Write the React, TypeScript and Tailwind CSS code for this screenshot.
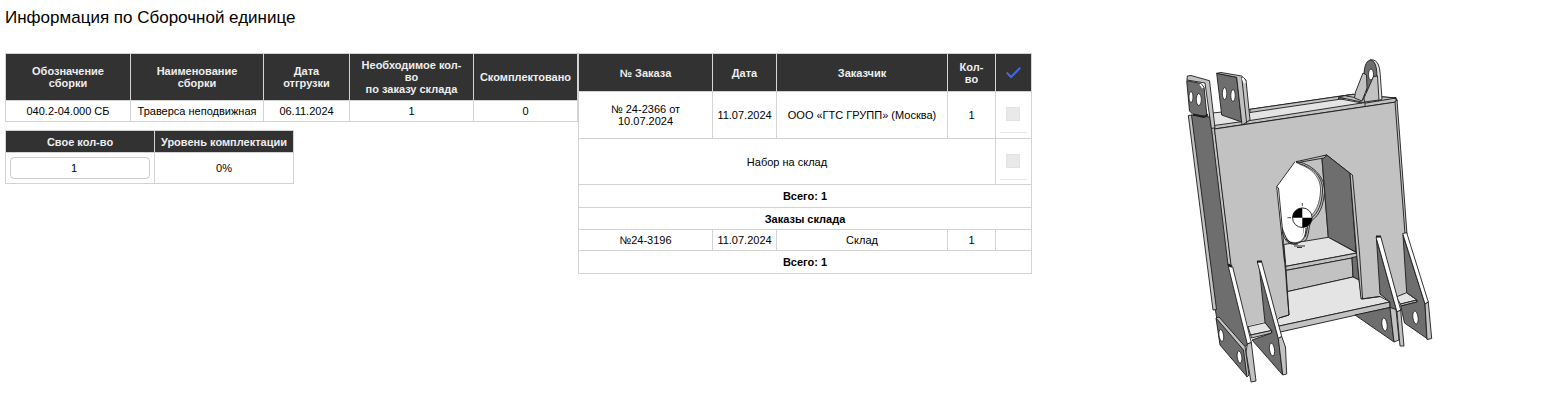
import React from "react";

const HEAD = "border border-[#d3d3d3] bg-[#323232] px-1 text-[#eeeeee] font-bold";
const CELL = "border border-[#d3d3d3] px-1";
const TABLE = "table-fixed border-collapse text-center text-[11px] leading-[12px]";

function PickBox({ label }: { label: string }) {
  return (
    <label className="flex h-9 items-center justify-center border-b border-[#e6e6e6] pr-px pb-px">
      <input
        type="checkbox"
        disabled
        aria-label={label}
        className="block size-3.5 appearance-none border border-[#e2e2e2] bg-[#e9e9e9]"
      />
    </label>
  );
}

function AssemblyTable() {
  return (
    <table className={TABLE + " w-[573px]"}>
      <colgroup>
        <col className="w-[125px]" />
        <col className="w-[133px]" />
        <col className="w-[86px]" />
        <col className="w-[124px]" />
        <col className="w-[104px]" />
      </colgroup>
      <thead>
        <tr className="h-[47px]">
          <th className={HEAD}>Обозначение<br />сборки</th>
          <th className={HEAD}>Наименование<br />сборки</th>
          <th className={HEAD}>Дата<br />отгрузки</th>
          <th className={HEAD}>Необходимое кол-<br />во<br />по заказу склада</th>
          <th className={HEAD}>Скомплектовано</th>
        </tr>
      </thead>
      <tbody>
        <tr className="h-[21px]">
          <td className={CELL}>040.2-04.000 СБ</td>
          <td className={CELL + " whitespace-nowrap"}>Траверса неподвижная</td>
          <td className={CELL}>06.11.2024</td>
          <td className={CELL}>1</td>
          <td className={CELL}>0</td>
        </tr>
      </tbody>
    </table>
  );
}

function QuantityTable() {
  return (
    <table className={TABLE + " mt-2 w-[289px]"}>
      <colgroup>
        <col className="w-[149px]" />
        <col className="w-[139px]" />
      </colgroup>
      <thead>
        <tr className="h-[22px]">
          <th className={HEAD}>Свое кол-во</th>
          <th className={HEAD + " whitespace-nowrap"}>Уровень комплектации</th>
        </tr>
      </thead>
      <tbody>
        <tr className="h-[31px]">
          <td className={CELL}>
            <input
              type="text"
              inputMode="numeric"
              defaultValue="1"
              aria-label="Свое кол-во"
              className="block h-[22px] w-full rounded border border-[#cccccc] bg-white pr-3 text-center text-[11px]"
            />
          </td>
          <td className={CELL}>0%</td>
        </tr>
      </tbody>
    </table>
  );
}

function OrdersTable() {
  return (
    <table className={TABLE + " w-[454px] shrink-0"}>
      <colgroup>
        <col className="w-[134px]" />
        <col className="w-[64px]" />
        <col className="w-[171px]" />
        <col className="w-[48px]" />
        <col className="w-[36px]" />
      </colgroup>
      <thead>
        <tr className="h-[38px]">
          <th className={HEAD}>№ Заказа</th>
          <th className={HEAD}>Дата</th>
          <th className={HEAD}>Заказчик</th>
          <th className={HEAD}>Кол-<br />во</th>
          <th className={HEAD}>
            <svg viewBox="0 0 15 12" className="mx-auto h-3 w-[15px]" fill="none" stroke="#4169e1" strokeWidth="2" aria-hidden="true">
              <path d="M.7 5.5 5 10 14.2 .8" />
            </svg>
          </th>
        </tr>
      </thead>
      <tbody>
        <tr className="h-[47px]">
          <td className={CELL}>№ 24-2366 от<br />10.07.2024</td>
          <td className={CELL}>11.07.2024</td>
          <td className={CELL + " whitespace-nowrap"}>ООО «ГТС ГРУПП» (Москва)</td>
          <td className={CELL}>1</td>
          <td className={CELL}><PickBox label="№ 24-2366" /></td>
        </tr>
        <tr className="h-[46px]">
          <td className={CELL} colSpan={4}>Набор на склад</td>
          <td className={CELL}><PickBox label="Набор на склад" /></td>
        </tr>
        <tr className="h-[23px]">
          <td className={CELL + " font-bold"} colSpan={5}>Всего: 1</td>
        </tr>
        <tr className="h-[22px]">
          <td className={CELL + " font-bold"} colSpan={5}>Заказы склада</td>
        </tr>
        <tr className="h-[21px]">
          <td className={CELL}>№24-3196</td>
          <td className={CELL}>11.07.2024</td>
          <td className={CELL}>Склад</td>
          <td className={CELL}>1</td>
          <td className={CELL} />
        </tr>
        <tr className="h-[23px]">
          <td className={CELL + " font-bold"} colSpan={5}>Всего: 1</td>
        </tr>
      </tbody>
    </table>
  );
}

const DARK = "#6e6e6e";
const MID = "#c2c2c2";
const PALE = "#e4e4e4";

function TraverseDrawing() {
  return (
    <svg
      viewBox="1180 53 260 335"
      className="h-[335px] w-[260px]"
      stroke="#1c1c1c"
      strokeWidth=".9"
      strokeLinejoin="round"
      fill="none"
      role="img"
      aria-label="Траверса неподвижная"
    >
      {/* top deck */}
      <path fill={PALE} d="M1212 113 1250 109.3 1353 94.3 1396 98 1396 102 1214 129Z" />
      <path fill={MID} d="M1250 109.3 1353 94.3 1355 97 1250 112.5Z" />
      <path fill={MID} d="M1214 125.5 1250 120.5 1365 102.5 1396 97.5V102L1214 129Z" />
      <path fill={MID} d="M1338 97 1353 94.3 1396 98 1366 103Z" />
      <path d="M1338 98.5 1362 103M1346 96 1370 100M1365 103V106" />

      {/* left column side */}
      <path fill={DARK} d="M1191 115 1210 117 1231 266 1248 344 1245 346.5 1216.7 318 1212 290Z" />
      <path fill={MID} d="M1188.3 115.5 1191.5 115 1216.5 309.5 1213 310Z" />
      <path fill={MID} d="M1209.3 110 1214.5 128.5 1231.5 266 1228 265Z" />

      {/* front plate with the opening */}
      <path
        fill={MID}
        fillRule="evenodd"
        stroke="none"
        d="M1214.5 129 1396 102 1406 234 1409 296 1361.7 299 1289 315 1263 322 1248 326 1231 265ZM1276.7 186.7 1295 161.7 1326.7 155 1350 173.3 1358 253 1361.7 299 1289 315 1285 260Z"
      />
      <path d="M1214.5 129 1396 102 1406 234M1396 102 1397.5 100 1394 97.5M1214.5 129 1231 265" />
      <path fill={MID} d="M1395 102 1397 100 1407 234 1405 234Z" />

      {/* inside of the opening */}
      <path fill={MID} stroke="none" d="M1295 161.7 1326.7 155 1329 240 1285 246 1283 228Z" />
      <path fill="#fff" stroke="none" d="M1276.7 186.7 1295 161.7C1315 166 1321 178 1320.5 191C1320 203 1317 211 1310 218C1304 223 1307 230 1303.5 237C1300 242 1296 243 1290 241C1287 239 1286 232 1282 228Z" />
      <path d="M1297 161.5C1315 165 1326 180 1324.5 192C1323.5 206 1319 215 1313.5 219C1308 223 1310 231 1306.5 239C1302 246 1291 245 1286 239" />
      <path d="M1296 162.5C1316 168 1323 179 1322.5 191C1322 204 1318 213 1311.5 218C1307 222 1308 230 1305 237" />
      <path strokeWidth=".7" d="M1299 164C1316 170 1321 181 1320.5 191C1320 203 1316 212 1309 218M1303.5 227C1304 237 1298 241 1291 241" />
      <path fill={DARK} d="M1321.7 156.5 1326.7 155 1350 173.3 1356 252 1328.3 237.3Z" />
      <path fill={MID} d="M1321.7 156.5 1324 156 1330.5 238.5 1328.3 237.3Z" stroke="none" />
      <path fill={DARK} d="M1322 157 1326.7 155 1350 173.3 1356 252 1328.3 237.3Z" />
      <path fill={MID} d="M1296 161.7 1326.7 155 1324 158 1298 162.5Z" />
      <path fill={PALE} d="M1283.5 244.5 1306 241 1328.3 237.3 1357 253 1285 266.5Z" />
      <path fill="#fff" stroke="none" d="M1284 231C1287 240 1291 243 1297 242Q1303 240 1303.5 228L1300 224Z" />
      <path d="M1282 228C1286 238 1287 243 1296 243.5C1303 243 1306 236 1306 228" />
      <path d="M1282.5 232C1284 241 1290 246 1298 244M1294 246H1305M1297 247.5H1302" />
      <path fill={MID} d="M1285 266.5 1357 253 1358 257 1285.5 270.5Z" />
      <path fill={MID} d="M1285.5 270.5 1352 258 1353 277 1287 291.7Z" />
      <path fill={DARK} d="M1352 257.5 1357 256.5 1359 280 1353 277Z" />

      {/* bottom deck */}
      <path fill={PALE} d="M1287 291.7 1353 277 1359 280 1361.7 299 1380 296.5 1390 302 1270 328 1279 318 1289 315Z" />
      <path fill={MID} d="M1270 328 1390 302V307.5L1278 332.5Z" />
      <path fill={MID} d="M1350 173.3 1352.5 175 1359.5 253 1362.5 298 1361 299 1356.5 253Z" />
      <path d="M1276.7 186.7 1278.5 188 1285.5 262 1289 315 1279 318" />
      <path d="M1276.7 186.7 1295 161.7M1276.7 186.7 1284.5 262M1361.7 299 1380 296.5" />

      {/* upper lugs */}
      <path fill={MID} d="M1187.3 76 1191 75.5 1209.5 80.7 1215 128 1211.3 128.3 1205 83 1187 80Z" />
      <path fill={DARK} d="M1186.7 80.7 1201 83.5 1204 87 1207 116.5 1193 114.5 1189.5 111Z" />
      <path strokeWidth="2" d="M1193 114.5 1204 117 1208 114.5" />
      <path stroke="#fff" strokeWidth="1.5" d="M1200 84 1203 88" />
      <path fill={DARK} d="M1216.7 73.3 1236.7 77.3 1241.7 122 1221.7 115Z" />
      <path fill={MID} d="M1216.7 73.3 1221 72.5 1241.7 76 1246 80 1250 120 1242 125 1236.7 77.3Z" />
      <path d="M1241.7 77 1246.7 123.5" />
      <path stroke="#fff" strokeWidth="2" d="M1242.5 78 1245 83" />
      <g fill="#fff" strokeWidth=".8">
        <ellipse cx="1191" cy="97" rx="2" ry="5.5" />
        <ellipse cx="1198.8" cy="99.5" rx="2.5" ry="6" />
        <ellipse cx="1224.6" cy="93.5" rx="2.2" ry="6" />
        <ellipse cx="1233" cy="95.5" rx="2.2" ry="6" />
      </g>

      {/* lifting eye */}
      <path fill={PALE} d="M1370 60C1376 59 1379 63 1380 72L1382 99 1378 101 1374 80Z" />
      <path fill={DARK} d="M1364 76C1364 65 1367 60 1371 60C1375 61 1377 67 1377 77L1367 96Z" />
      <ellipse cx="1371" cy="74.5" rx="2.5" ry="5.5" fill="#fff" strokeWidth=".8" />
      <path fill={MID} d="M1363 73 1366.5 75 1367 88 1362 101 1354.5 98 1355.5 92Z" />
      <path fill={MID} d="M1373.5 76.5 1377.5 76 1379 100 1364.5 102 1364 98Z" />

      {/* lower left lugs */}
      <path fill={PALE} d="M1248 326.7 1265 322.7 1271.7 330.5 1250.7 335Z" />
      <path fill={MID} d="M1250.7 335 1271.7 330.5V333L1251.5 338Z" />
      <path fill={DARK} d="M1259 264 1278.3 337 1282.7 375 1252 340 1271.7 333V330.5L1265 322.7Z" />
      <path fill="#fff" d="M1257.3 262 1261.7 261.7 1281.7 336.5 1278.3 338.5Z" />
      <path strokeWidth="2" d="M1257 261.5H1262" />
      <path fill={MID} d="M1278.3 338.5 1281.7 336.5 1285.5 347 1286.7 374 1282.7 375Z" />
      <path fill="#fff" d="M1228.3 266.5 1232.7 267 1251.3 342.5 1247.3 344Z" />
      <path strokeWidth="2" d="M1228 264.5 1232 266.5" />
      <path fill={MID} d="M1247.3 344 1251.3 342.5 1256 381 1251 382 1246 352Z" />
      <path fill={DARK} d="M1216 318 1244 349 1247 376.7 1220 345Z" />
      <path fill={MID} d="M1216 318 1219 317 1245 346.5 1249 375 1247 377 1243.5 350Z" />
      <g fill="#fff" strokeWidth=".8">
        <ellipse cx="1221.3" cy="335.5" rx="2.3" ry="6" transform="rotate(-8 1221.3 335.5)" />
        <ellipse cx="1239.5" cy="357" rx="2.3" ry="6" transform="rotate(-8 1239.5 357)" />
        <ellipse cx="1272" cy="349.5" rx="2.5" ry="6.5" transform="rotate(-8 1272 349.5)" />
      </g>

      {/* lower right lugs */}
      <path fill={PALE} d="M1396 297 1406.7 292.7 1417 300 1400.5 304Z" />
      <path fill={MID} d="M1400.5 304 1417 300V302L1401 306Z" />
      <path fill={DARK} d="M1403 235 1425 304 1427 338.5 1404.5 323 1400.7 306 1417 302V300L1406.7 292.7Z" />
      <path fill="#fff" d="M1402.7 233.5 1406.7 232.7 1428.3 302 1425 304Z" />
      <path fill={MID} d="M1425 304 1428.3 302 1431.7 338.5 1427 339.5Z" />
      <path fill={DARK} d="M1355 315 1390 307.5 1394 342Z" />
      <path fill={DARK} d="M1376.5 239 1397 311.5 1390 307.5V302L1380 294Z" />
      <path fill={MID} d="M1390 307.5 1396 309.5 1399 340 1394 342Z" />
      <path fill="#fff" d="M1376 237 1380.7 236.5 1400.7 310 1397 312Z" />
      <path strokeWidth="2" d="M1376 236.5H1381" />
      <path fill={MID} d="M1397 312 1400.7 310 1404 346 1400 346Z" />
      <g fill="#fff" strokeWidth=".8">
        <ellipse cx="1384.5" cy="324.5" rx="2.6" ry="6.5" transform="rotate(-8 1384.5 324.5)" />
        <ellipse cx="1415.5" cy="317.5" rx="2.6" ry="6.5" transform="rotate(-8 1415.5 317.5)" />
      </g>

      {/* centre of mass */}
      <circle cx="1302.3" cy="217.7" r="9.8" fill="#fff" />
      <path fill="#000" stroke="none" d="M1302.3 217.7V207.9A9.8 9.8 0 0 0 1292.5 217.7ZM1302.3 217.7V227.5A9.8 9.8 0 0 0 1312.1 217.7Z" />
      <path strokeWidth=".8" d="M1302.3 203V206M1287.5 217.7H1291" />
    </svg>
  );
}

export default function App() {
  return (
    <main className="bg-white px-[5px] pb-5 font-['Liberation_Sans',Arial,sans-serif] text-black">
      <h1 className="pt-2 text-[17px] leading-5">Информация по Сборочной единице</h1>
      <div className="mt-[25px] flex items-start">
        <section className="shrink-0">
          <AssemblyTable />
          <QuantityTable />
        </section>
        <OrdersTable />
        <div className="flex flex-1 justify-center pl-[30px]">
          <TraverseDrawing />
        </div>
      </div>
    </main>
  );
}
